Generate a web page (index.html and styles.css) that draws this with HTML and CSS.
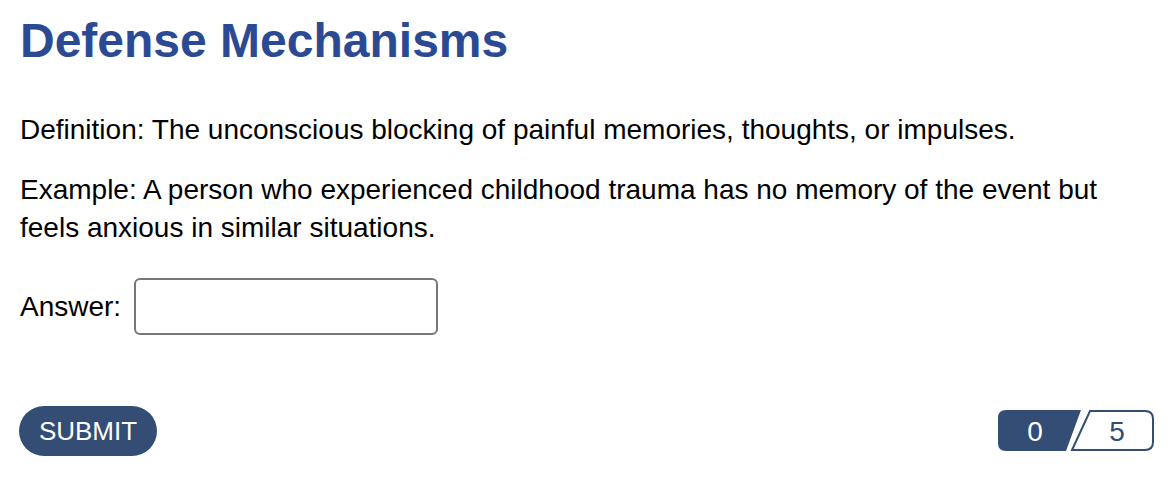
FILE: index.html
```html
<!DOCTYPE html>
<html>
<head>
<title>Defense Mechanisms</title>
<link rel="stylesheet" href="styles.css">
</head>
<body>
<div class="quiz">
<h1 class="quiz-title">Defense Mechanisms</h1>
<p class="clue">Definition: The unconscious blocking of painful memories, thoughts, or impulses.</p>
<p class="clue">Example: A person who experienced childhood trauma has no memory of the event but feels anxious in similar situations.</p>
<div class="answer-row">
<label for="answer" class="answer-label">Answer:</label>
<input type="text" id="answer" class="answer-input">
</div>
<div class="quiz-footer">
<button class="submit">SUBMIT</button>
<svg class="score" width="160" height="46" viewBox="0 0 160 46">
<path d="M10 2 L85 2 L70 43 L10 43 Q2 43 2 35 L2 10 Q2 2 10 2 Z" fill="#334d75"/>
<path d="M94 3 L149 3 Q157 3 157 11 L157 34 Q157 42 149 42 L76 42 Z" fill="#fff" stroke="#334d75" stroke-width="2"/>
<text x="39" y="33" class="score-now">0</text>
<text x="121" y="33" class="score-total">5</text>
</svg>
</div>
</div>
</body>
</html>
```

FILE: styles.css
```css
body {
	margin: 0;
	background-color: #fff;
	color: #000;
	font-family: "Liberation Sans", Arial, sans-serif;
}

.quiz {
	padding: 13px 22px 0 20px;
}

.quiz-title {
	color: #2c4a94;
	font-size: 48px;
	font-weight: bold;
	line-height: 55px;
	margin: 0 0 43px 0;
}

.clue {
	font-size: 28px;
	line-height: 38px;
	margin: 0 0 22px 0;
}

.answer-row {
	align-items: center;
	display: flex;
	margin-top: 31px;
}

.answer-label {
	font-size: 28px;
	margin-right: 13px;
}

.answer-input {
	border: 2px solid #777;
	border-radius: 6px;
	box-sizing: border-box;
	font-size: 24px;
	height: 57px;
	outline: none;
	padding: 0 10px;
	width: 304px;
}

.quiz-footer {
	align-items: center;
	display: flex;
	justify-content: space-between;
	margin-top: 71px;
}

.submit {
	background-color: #334d75;
	border: none;
	border-radius: 25px;
	color: #fff;
	font-family: "Liberation Sans", Arial, sans-serif;
	font-size: 26px;
	height: 50px;
	margin-left: -1px;
	padding: 0;
	width: 138px;
}

.score {
	display: block;
	margin-right: -2px;
}

.score text {
	font-family: "Liberation Sans", Arial, sans-serif;
	font-size: 28px;
	text-anchor: middle;
}

.score-now {
	fill: #fff;
}

.score-total {
	fill: #334d75;
}
```
